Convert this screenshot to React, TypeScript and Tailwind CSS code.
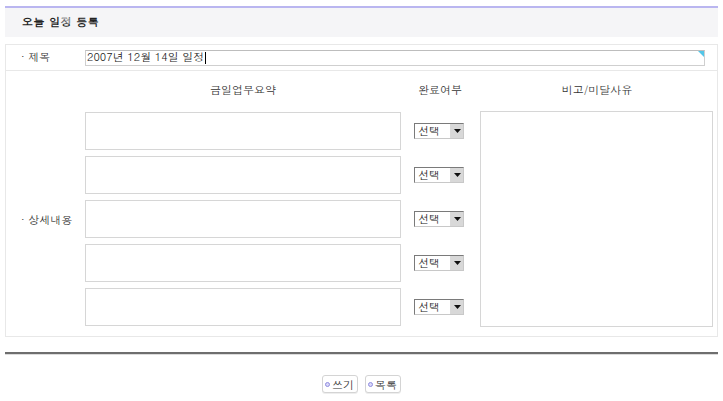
const rows = [0, 1, 2, 3, 4];

const font = "font-['Dotum','Noto_Sans_CJK_KR',sans-serif]";

function SelectBox() {
  return (
    <div className="flex h-[16px] w-[50px] items-stretch border border-[#7a7a7a] border-r-[#c8c8c8] border-b-[#c8c8c8] bg-white">
      <span className="flex-1 pl-[3px] text-[11px] leading-[14px] text-[#222]">선택</span>
      <span className="flex w-[13px] items-center justify-center border-l border-[#d9d9d9] bg-[#d8d8d8]">
        <svg width="7" height="4" viewBox="0 0 7 4">
          <path d="M0 0h7L3.5 4z" fill="#111" />
        </svg>
      </span>
    </div>
  );
}

function Button({ label }: { label: string }) {
  return (
    <button className="flex h-[18px] w-[36px] items-center justify-center gap-[2px] rounded-[3px] border border-[#d4d4d4] bg-white text-[11px] leading-none text-[#333] shadow-[0_1px_0_#eee]">
      <span className="h-[5px] w-[5px] rounded-full border border-[#8f8ce0] bg-[#d9d7f7]" />
      {label}
    </button>
  );
}

export default function App() {
  return (
    <div className={`h-[401px] w-[723px] bg-white px-[5px] pt-[6px] ${font} text-[#333]`}>
      {/* Title bar */}
      <div className="border-t-2 border-[#bab6f0] bg-[#f5f5f7]">
        <div className="flex h-[29px] items-center pl-[17px] text-[11px] font-bold tracking-[0.5px] text-[#222]">
          오늘 일정 등록
        </div>
      </div>

      {/* Form table */}
      <div className="mt-[7px] border border-[#e8e8e8]">
        <div className="flex h-[26px] items-center border-b border-[#e8e8e8]">
          <div className="w-[79px] pl-[15px] text-[11px]">· 제목</div>
          <div className="relative flex h-[16px] w-[620px] items-center border border-[#cfcfcf] border-t-[#bdbdbd] pl-[1px] text-[11px] text-[#222]">
            2007년 12월 14일 일정
            <span className="ml-[1px] h-[12px] w-px bg-black" />
            <span className="absolute right-0 top-0 h-0 w-0 border-l-[6px] border-t-[6px] border-l-transparent border-t-[#53c6e8]" />
          </div>
        </div>

        <div className="flex">
          <div className="flex w-[75px] items-center pl-[15px] pt-[34px] text-[11px]">· 상세내용</div>
          <div className="flex-1 pl-[4px] pb-[9px]">
            <div className="flex h-[41px] pt-[12px] text-[11px] leading-[13px]">
              <div className="w-[316px] text-center">금일업무요약</div>
              <div className="w-[80px] pl-[14px]">
                <div className="w-[50px] text-center">완료여부</div>
              </div>
              <div className="w-[232px] text-center">비고/미달사유</div>
            </div>
            <div className="flex">
              <div className="flex flex-col gap-[6px]">
                {rows.map((r) => (
                  <div key={r} className="flex items-center">
                    <div className="h-[38px] w-[316px] border border-[#d6d6d6] bg-white" />
                    <div className="w-[79px] pl-[13px]">
                      <SelectBox />
                    </div>
                  </div>
                ))}
              </div>
              <div className="-mt-px h-[216px] w-[233px] border border-[#d6d6d6] bg-white" />
            </div>
          </div>
        </div>
      </div>

      {/* Divider */}
      <div className="mt-[15px] h-[3px] border-t-2 border-[#6e6e6e] bg-[#dcdcdc]" />

      {/* Buttons */}
      <div className="mt-[20px] flex justify-center gap-[7px] pr-[1px]">
        <Button label="쓰기" />
        <Button label="목록" />
      </div>
    </div>
  );
}
